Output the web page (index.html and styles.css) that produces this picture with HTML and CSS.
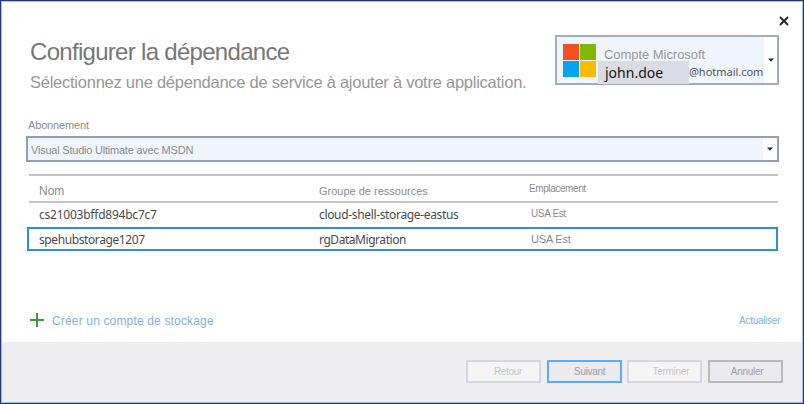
FILE: index.html
```html
<!DOCTYPE html>
<html lang="fr">
<head>
<meta charset="utf-8">
<title>Configurer la dépendance</title>
<link rel="stylesheet" href="styles.css">
</head>
<body>
<div class="window">
  <div class="titlebar">
    <svg class="close" viewBox="0 0 10 10"><path d="M1 1L9 9M9 1L1 9"/></svg>
  </div>
  <header class="header">
    <div class="heading">
      <h1><span>Configurer la dépendance</span></h1>
      <p><span>Sélectionnez une dépendance de service à ajouter à votre application.</span></p>
    </div>
    <div class="account">
      <div class="logo"><i class="red"></i><i class="green"></i><i class="blue"></i><i class="yellow"></i></div>
      <div class="identity">
        <div class="provider"><span>Compte Microsoft</span></div>
        <div class="mail"><b><span>john.doe</span></b><em><span>@hotmail.com</span></em></div>
      </div>
      <div class="drop"><svg viewBox="0 0 6 4"><path d="M0 .5H6L3 3.7Z"/></svg></div>
    </div>
  </header>
  <main class="main">
    <label class="label"><span>Abonnement</span></label>
    <div class="combo">
      <div class="value"><span>Visual Studio Ultimate avec MSDN</span></div>
      <div class="drop"><svg viewBox="0 0 6 4"><path d="M0 .5H6L3 3.7Z"/></svg></div>
    </div>
    <div class="table">
      <div class="row head"><span class="name">Nom</span><span class="group">Groupe de ressources</span><span class="place">Emplacement</span></div>
      <div class="row first"><span class="name">cs21003bffd894bc7c7</span><span class="group">cloud-shell-storage-eastus</span><span class="place">USA Est</span></div>
      <div class="row selected"><span class="name">spehubstorage1207</span><span class="group">rgDataMigration</span><span class="place">USA Est</span></div>
    </div>
    <div class="links">
      <svg class="plus" viewBox="0 0 14 14"><path d="M7 0V14M0 7H14"/></svg>
      <a class="create">Créer un compte de stockage</a>
      <a class="refresh">Actualiser</a>
    </div>
  </main>
  <footer class="footer">
    <button class="disabled back">Retour</button>
    <button class="primary next">Suivant</button>
    <button class="disabled finish">Terminer</button>
    <button class="cancel">Annuler</button>
  </footer>
</div>
</body>
</html>
```
FILE: styles.css
```css
* { box-sizing: border-box; }
body { margin: 0; font-family: "Liberation Sans", Arial, sans-serif; color: #8c8c8c; }
.window { width: 804px; height: 404px; border: 1px solid #203c7c; box-shadow: inset 0 0 0 1px #a9b8d6; background: #fff; display: flex; flex-direction: column; overflow: hidden; white-space: nowrap; }
.titlebar { height: 34px; flex: none; display: flex; justify-content: flex-end; padding: 15px 14px 0 0; }
.close { width: 10px; height: 10px; stroke: #222; stroke-width: 1.8; fill: none; }
.header { height: 84px; flex: none; display: flex; justify-content: space-between; padding: 0 24px 0 29px; }
.heading { width: 500px; }
h1 { margin: 3px 0 0; font-size: 24px; line-height: 28px; font-weight: 400; color: #777; letter-spacing: -.7px; }
.heading p { margin: 6px 0 0; font-size: 16.5px; line-height: 20px; color: #979797; letter-spacing: -.25px; }
.account { width: 224px; height: 50px; flex: none; border: 2px solid #a3adbc; background: #f0f4fd; display: flex; }
.logo { width: 33px; height: 33px; flex: none; margin: 7px 0 0 6px; display: grid; grid-template-columns: 16px 16px; grid-template-rows: 16px 16px; gap: 1px; }
.red { background: #f25022; }
.green { background: #7fba00; }
.blue { background: #00a4ef; }
.yellow { background: #ffb900; }
.identity { flex: 1; min-width: 0; padding-top: 9px; }
.provider { height: 15px; line-height: 17px; padding-left: 8px; font-size: 13px; color: #999; letter-spacing: -.05px; }
.mail { display: flex; height: 23px; font-family: "Noto Sans", sans-serif; }
.mail b { width: 91px; flex: none; margin-left: 2px; background: #dadce4; padding-left: 7px; color: #111; font-size: 14px; line-height: 23px; font-weight: 400; }
.mail em { font-style: normal; font-size: 11px; line-height: 22px; color: #555; letter-spacing: -.02px; }
.drop { width: 14px; flex: none; background: #fdfdfe; display: flex; align-items: center; justify-content: center; }
.account .drop { width: 13px; }
.drop svg { width: 6px; height: 4px; fill: #1e2a4a; }
.main { flex: 1; }
.label { display: block; height: 17px; padding-left: 27px; font-size: 11px; line-height: 13px; letter-spacing: -.15px; }
.combo { margin: 0 24px 0 25px; height: 26px; border: 2px solid #919fb3; background: #f0f4fd; display: flex; }
.value { flex: 1; padding-left: 3px; font-size: 11px; line-height: 24px; letter-spacing: -.22px; }
.table { margin: 12px 25px 0 26px; }
.row { display: flex; }
.row .name { width: 280px; }
.row .group { width: 210px; }
.head { margin-left: 2px; height: 29px; border: solid #c4c4c4; border-width: 2px 0; padding: 2px 0 0 10px; line-height: 26px; font-size: 12px; }
.head .group { font-size: 11px; }
.head .place { font-size: 10px; line-height: 22px; letter-spacing: -.4px; }
.first { height: 24px; padding-left: 12px; line-height: 24px; }
.selected { height: 24px; border: 2px solid #318fd0; padding-left: 10px; line-height: 21px; }
.first .name, .first .group, .selected .name, .selected .group { font-family: "Noto Sans", sans-serif; font-size: 12px; color: #4a4a4a; }
.first .name { letter-spacing: -.23px; }
.first .group { letter-spacing: -.34px; }
.selected .name { letter-spacing: -.4px; }
.selected .group { letter-spacing: -.45px; }
.first .place { font-size: 10px; padding-left: 2px; line-height: 22px; letter-spacing: -.35px; }
.selected .place { font-size: 11px; padding-left: 2px; letter-spacing: -.2px; }
.links { display: flex; align-items: center; height: 20px; margin: 59px 23px 0 29px; color: #7fb2dd; }
.plus { width: 14px; height: 14px; stroke: #429a42; stroke-width: 2; margin-right: 8px; }
.create { font-size: 12px; letter-spacing: .16px; padding-top: 2px; }
.refresh { font-size: 10px; margin-left: auto; letter-spacing: -.3px; }
.footer { height: 60px; flex: none; margin: 0 1px 1px; background: #eeeef0; padding: 18px 19px 0; display: flex; justify-content: flex-end; gap: 5.67px; }
button { width: 75px; height: 23px; padding: 0; border: 2px solid #bababa; background: #ebeaf0; color: #a0a0a0; font: 10px/19px "Liberation Sans", Arial, sans-serif; letter-spacing: -.3px; }
.disabled { border-color: #d7d7e2; background: #f5f5f5; color: #c8c8c8; }
.primary { border-color: #56adfc; }
.back { padding-left: 9px; }
.next { padding-left: 11px; }
.finish { padding-left: 12px; }
.cancel { padding-left: 3px; }
```
